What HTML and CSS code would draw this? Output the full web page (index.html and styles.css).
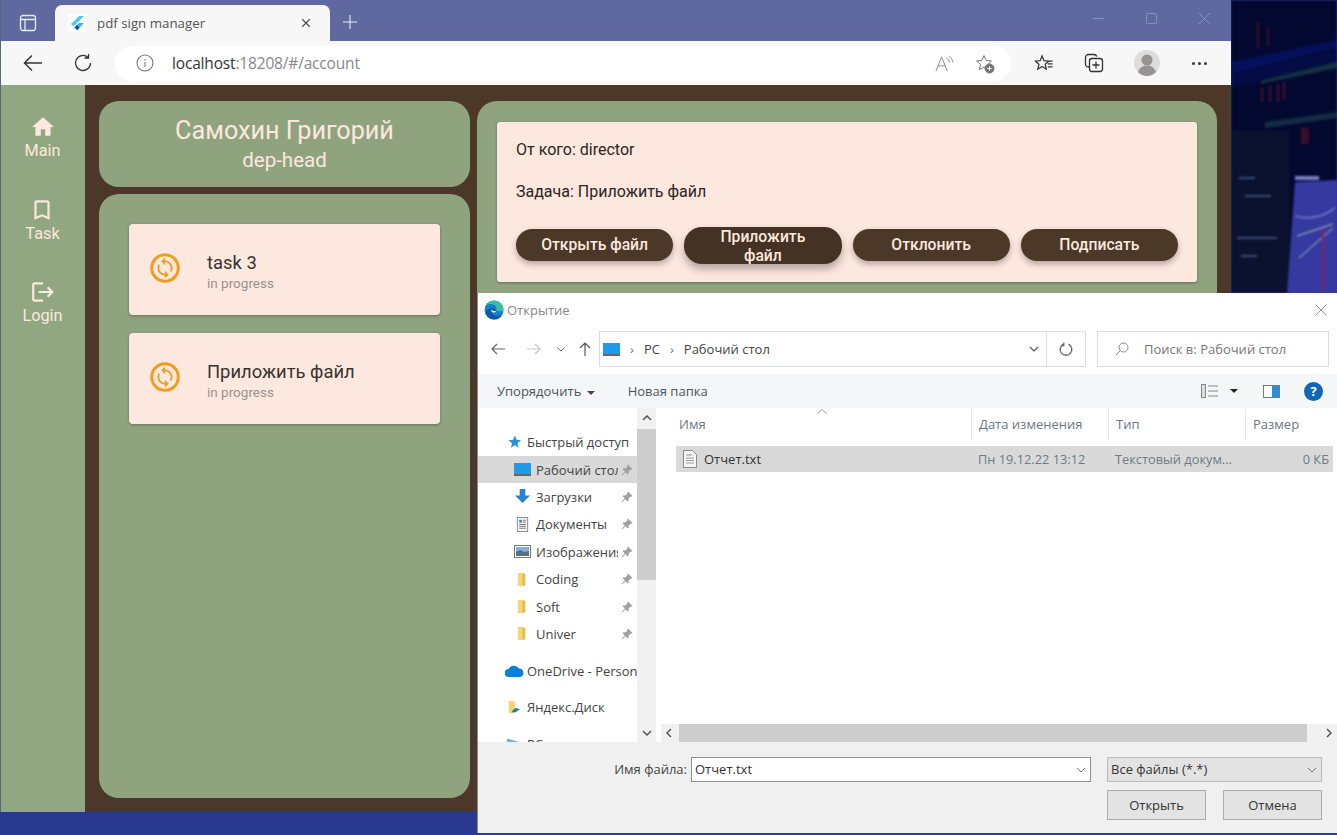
FILE: index.html
```html
<!DOCTYPE html>
<html lang="en">
<head>
  <meta charset="UTF-8">
  <title>pdf sign manager</title>
  <link rel="stylesheet" href="styles.css">
</head>
<body>

  <div class="desktop">

    <!-- Wallpaper seen to the right of the browser -->
    <svg class="wallpaper" viewBox="0 0 106 293" preserveAspectRatio="none">
      <rect width="106" height="293" fill="#030830"/>
      <path d="M0 62 L106 40 V48 L0 74Z" fill="#05105a"/>
      <path d="M30 76 L106 62 V68 L30 84Z" fill="#12323f"/>
      <path d="M34 122 L106 112 V118 L34 128Z" fill="#122c44"/>
      <path d="M0 74 L106 50 V62 L0 88Z" fill="#040c46"/>
      <path d="M26 22 h2 v26 h-2z M36 28 h2 v18 h-2z" fill="#3a1028"/>
      <path d="M30 88 h2 v14 h-2z M38 86 h2 v16 h-2z M46 84 h2 v18 h-2z M52 82 h2 v18 h-2z" fill="#4a1030"/>
      <path d="M40 132 h2 v18 h-2z M70 128 h8 v16 h-8z" fill="#380e2a"/>
      <rect x="0" y="131" width="58" height="162" fill="#0b1230"/>
      <path d="M64 182 L106 180 V293 L56 293Z" fill="#3639a0"/>
      <path d="M64 176 h24 v4 h-24z" fill="#7b80c8"/>
      <path d="M64 216 Q85 222 104 208" stroke="#8a90d0" stroke-width="1.200" fill="none"/>
      <path d="M66 236 L102 224 M68 258 L102 228" stroke="#a8d4b8" stroke-width="1"/>
      <path d="M8 178 h16 M14 196 h26 M6 238 h40 M10 256 h16" stroke="#6f84b8" stroke-width="1"/>
      <path d="M92 290 V228" stroke="#8a2060" stroke-width="2"/>
    </svg>

    <!-- Browser window -->
    <div class="browser">
      <div class="tabstrip">
        <svg class="tab-panel-icon" viewBox="0 0 18 18"><rect x="1.500" y="1.500" width="15" height="15" rx="2.500"/><path d="M1.500 5.500h15M6 5.500v11"/></svg>
        <div class="tab">
          <svg class="flutter" viewBox="0 0 18 18">
            <rect width="18" height="18" fill="#fff"/>
            <path d="M11 2 L3 10 L5.500 12.500 L16 2Z" fill="#54c5f8"/>
            <path d="M11 9 L6.500 13.500 L9 16 L16 9Z" fill="#29b6f6"/>
            <path d="M6.500 13.500 L9 11 L11.500 13.500 L9.500 16Z" fill="#01579b"/>
          </svg>
          <span class="tab-title">pdf sign manager</span>
          <svg class="tab-close" viewBox="0 0 12 12"><path d="M1.500 1.500l9 9M10.500 1.500l-9 9"/></svg>
        </div>
        <svg class="tab-new" viewBox="0 0 18 18"><path d="M9 1v16M1 9h16"/></svg>
        <div class="window-btns">
          <svg viewBox="0 0 14 14"><path d="M1 7h12"/></svg>
          <svg viewBox="0 0 14 14"><rect x="1.500" y="1.500" width="11" height="11" rx="1.500"/></svg>
          <svg viewBox="0 0 14 14"><path d="M1 1l12 12M13 1L1 13"/></svg>
        </div>
      </div>

      <div class="toolbar">
        <svg class="tool-icon back" viewBox="0 0 20 20"><path d="M19 10H1.500M9 2.500L1.500 10 9 17.500"/></svg>
        <svg class="tool-icon reload" viewBox="0 0 20 20"><path d="M17.500 10a7.500 7.500 0 1 1-2.600-5.700M15.500 1v4h-4"/></svg>
        <div class="omnibox">
          <svg class="info" viewBox="0 0 18 18"><circle cx="9" cy="9" r="8"/><path d="M9 8v5M9 5v1.400"/></svg>
          <span class="url"><b>localhost</b>:18208/#/account</span>
          <svg class="read-aloud" viewBox="0 0 20 18"><path d="M1 17L7 2l6 15M3.200 11.500h7.600"/><path d="M12 3q3 1.500 3.500 5M14.500 1q4 2.500 4.500 7"/></svg>
          <svg class="fav-add" viewBox="0 0 20 20"><path d="M9 1.500l2.200 5 5.300.5-4 3.500 1.200 5.200L9 13l-4.700 2.700 1.200-5.200-4-3.500 5.300-.5z"/><circle cx="14.500" cy="14.500" r="4.500"/><path class="plus" d="M14.500 12.300v4.400M12.300 14.500h4.400"/></svg>
        </div>
        <svg class="tool-icon fav" viewBox="0 0 20 20"><path d="M8 2l2 5 5 .5-3.800 3.300 1.200 5.200L8 13.200l-4.500 2.800 1.200-5.200L1 7.500 6 7zM14 7.500h5M14 10.500h5M14 13.500h5"/></svg>
        <svg class="tool-icon coll" viewBox="0 0 20 20"><path d="M6 14H4.500A3 3 0 0 1 1.500 11V4.500a3 3 0 0 1 3-3H10a3 3 0 0 1 2.800 2"/><rect x="5.500" y="5.500" width="13" height="13" rx="2.500"/><path d="M12 8.500v7M8.500 12h7"/></svg>
        <svg class="avatar" viewBox="0 0 26 26"><circle cx="13" cy="13" r="13" fill="#dcdcdc"/><circle cx="13" cy="10" r="5.500" fill="#969390"/><path d="M4 22c2-5 5-6.500 9-6.500s7 1.500 9 6.500q-4 4-9 4t-9-4z" fill="#969390"/></svg>
        <div class="more"><i></i><i></i><i></i></div>
      </div>

      <!-- Flutter app -->
      <div class="app">
        <nav class="side-nav">
          <a class="nav-item">
            <svg viewBox="0 0 24 24"><path d="M10 20v-6h4v6h5v-8h3L12 3 2 12h3v8z"/></svg>
            <span>Main</span>
          </a>
          <a class="nav-item">
            <svg viewBox="0 0 24 24"><path d="M17 3H7c-1.100 0-1.990.9-1.990 2L5 21l7-3 7 3V5c0-1.100-.9-2-2-2zm0 15l-5-2.180L7 18V5h10v13z"/></svg>
            <span>Task</span>
          </a>
          <a class="nav-item">
            <svg viewBox="0 0 24 24"><path d="M17 7l-1.410 1.410L18.170 11H8v2h10.170l-2.580 2.580L17 17l5-5zM4 5h8V3H4c-1.100 0-2 .9-2 2v14c0 1.100.9 2 2 2h8v-2H4V5z"/></svg>
            <span>Login</span>
          </a>
        </nav>

        <div class="left-col">
          <div class="panel profile">
            <div class="profile-name">Самохин Григорий</div>
            <div class="profile-role">dep-head</div>
          </div>
          <div class="panel tasks">
            <div class="task-card">
              <svg class="task-icon" viewBox="0 0 30 30"><circle cx="15" cy="15" r="13.300"/><g transform="translate(3.600 3.600) scale(.95)"><path d="M12 4V1L8 5l4 4V6c3.310 0 6 2.690 6 6 0 1.010-.25 1.970-.7 2.800l1.460 1.460C19.540 15.030 20 13.570 20 12c0-4.420-3.580-8-8-8zm0 14c-3.310 0-6-2.690-6-6 0-1.010.25-1.970.7-2.800L5.240 7.740C4.460 8.970 4 10.430 4 12c0 4.420 3.580 8 8 8v3l4-4-4-4v3z"/></g></svg>
              <div class="task-text">
                <div class="task-title">task 3</div>
                <div class="task-status">in progress</div>
              </div>
            </div>
            <div class="task-card">
              <svg class="task-icon" viewBox="0 0 30 30"><circle cx="15" cy="15" r="13.300"/><g transform="translate(3.600 3.600) scale(.95)"><path d="M12 4V1L8 5l4 4V6c3.310 0 6 2.690 6 6 0 1.010-.25 1.970-.7 2.800l1.460 1.460C19.540 15.030 20 13.570 20 12c0-4.420-3.580-8-8-8zm0 14c-3.310 0-6-2.690-6-6 0-1.010.25-1.970.7-2.800L5.240 7.740C4.460 8.970 4 10.430 4 12c0 4.420 3.580 8 8 8v3l4-4-4-4v3z"/></g></svg>
              <div class="task-text">
                <div class="task-title">Приложить файл</div>
                <div class="task-status">in progress</div>
              </div>
            </div>
          </div>
        </div>

        <div class="panel detail">
          <div class="detail-card">
            <p class="detail-line">От кого: director</p>
            <p class="detail-line">Задача: Приложить файл</p>
            <div class="detail-actions">
              <button class="pill">Открыть файл</button>
              <button class="pill pill-tall">Приложить файл</button>
              <button class="pill">Отклонить</button>
              <button class="pill">Подписать</button>
            </div>
          </div>
        </div>
      </div>
    </div>

    <!-- File open dialog -->
    <div class="dialog">
      <div class="dlg-title">
        <svg class="edge" viewBox="0 0 20 20">
          <circle cx="10" cy="10" r="9.500" fill="#1b7fc9"/>
          <path d="M19.500 10a9.500 9.500 0 0 0-18-4.200C4 3.500 9 3.500 11.500 6c1.500 1.500 1.500 3.500.5 4.500 3 1 7 1 7.500-.5z" fill="#35c1a3"/>
          <path d="M12 10.500c-1 1.500-5 1.500-5-1 0 5 5 8 11 5.500-2 3-4 4.500-8 4.500-5 0-8-4-8-8 2-4 9-5 10-1z" fill="#0c59a4"/>
          <path d="M12 10.500c0 1.500-1 2-2.500 2s-2.500-1.500-2.500-3c1 1.500 4 2 5 1z" fill="#fff"/>
        </svg>
        <span>Открытие</span>
        <svg class="dlg-close" viewBox="0 0 12 12"><path d="M.5.500l11 11M11.500.500l-11 11"/></svg>
      </div>

      <div class="dlg-address">
        <svg class="nav-arrow" viewBox="0 0 14 12"><path d="M14 6H1M6 1L1 6l5 5"/></svg>
        <svg class="nav-arrow off" viewBox="0 0 14 12"><path d="M0 6h13M8 1l5 5-5 5"/></svg>
        <svg class="nav-drop" viewBox="0 0 8 5"><path d="M.5.500L4 4 7.500.500"/></svg>
        <svg class="nav-up" viewBox="0 0 12 14"><path d="M6 14V1M1 6l5-5 5 5"/></svg>
        <div class="crumbs">
          <svg class="monitor" viewBox="0 0 17 13"><rect width="17" height="11" fill="#1f9be8"/><rect y="11" width="17" height="2" fill="#666"/></svg>
          <span class="chev">›</span><span>PC</span><span class="chev">›</span><span>Рабочий стол</span>
          <svg class="crumb-drop" viewBox="0 0 10 6"><path d="M1 1l4 4 4-4"/></svg>
          <div class="crumb-refresh">
            <svg viewBox="0 0 14 14"><path d="M4.500 2.200a5.800 5.800 0 1 0 5 0M4.800 .5v3H1.800"/></svg>
          </div>
        </div>
        <div class="search">
          <svg viewBox="0 0 14 14"><circle cx="8.500" cy="5.500" r="4.500"/><path d="M5.200 8.800L.8 13.200"/></svg>
          <span>Поиск в: Рабочий стол</span>
        </div>
      </div>

      <div class="dlg-bar">
        <span class="bar-btn">Упорядочить <i class="caret"></i></span>
        <span class="bar-btn new-folder">Новая папка</span>
        <div class="bar-right">
          <svg class="view-icon" viewBox="0 0 17 14"><rect x=".5" y=".5" width="4" height="13" fill="#ddd" stroke="#888"/><path d="M7 2h10M7 7h10M7 12h10" stroke="#888"/></svg>
          <i class="caret dark"></i>
          <svg class="pane-icon" viewBox="0 0 17 13"><rect x=".5" y=".5" width="16" height="12" fill="#fff" stroke="#777"/><rect x="9" y="1" width="7" height="11" fill="#2a8fd8"/></svg>
          <span class="help">?</span>
        </div>
      </div>

      <div class="dlg-body">
        <div class="tree">
          <div class="tree-item top quick">
            <svg class="t-icon" viewBox="0 0 16 16"><path d="M9 .5l2 5 5 .5-4 3.300 1.200 5.200L9 11.800 4.500 14.500l1.200-5.200-4-3.300 5.300-.5z" fill="#2f8fdc"/></svg>
            <span>Быстрый доступ</span>
          </div>
          <div class="tree-item selected">
            <svg class="t-icon wide" viewBox="0 0 17 13"><rect width="17" height="11" fill="#1f9be8"/><rect y="11" width="17" height="2" fill="#666"/></svg>
            <span class="t-label">Рабочий стол</span>
            <svg class="pin" viewBox="0 0 12 12"><path d="M7 .5l4.500 4.500-1 .8-.8-.3-2.200 2.200.2 1.800-1 .9L4.500 8.200 1 11.500l-.5-.5 3.300-3.500L1.600 5.300l.9-1 1.800.2 2.200-2.200-.3-.8z"/></svg>
          </div>
          <div class="tree-item">
            <svg class="t-icon wide" viewBox="0 0 16 16"><path d="M5 0h6v7h5l-8 8-8-8h5z" fill="#2a80d2"/></svg>
            <span class="t-label">Загрузки</span>
            <svg class="pin" viewBox="0 0 12 12"><path d="M7 .5l4.500 4.500-1 .8-.8-.3-2.200 2.200.2 1.800-1 .9L4.500 8.200 1 11.500l-.5-.5 3.300-3.500L1.600 5.300l.9-1 1.800.2 2.200-2.200-.3-.8z"/></svg>
          </div>
          <div class="tree-item">
            <svg class="t-icon wide" viewBox="0 0 16 16"><rect x="2.500" y=".5" width="11" height="15" fill="#f4f4f4" stroke="#888"/><path d="M4.500 3h3v3h-3z" fill="#3a8fd0"/><path d="M8.500 3.500h3M8.500 5.500h3M4.500 8h7M4.500 10h7M4.500 12h7" stroke="#777"/></svg>
            <span class="t-label">Документы</span>
            <svg class="pin" viewBox="0 0 12 12"><path d="M7 .5l4.500 4.500-1 .8-.8-.3-2.200 2.200.2 1.800-1 .9L4.500 8.200 1 11.500l-.5-.5 3.300-3.500L1.600 5.300l.9-1 1.800.2 2.200-2.200-.3-.8z"/></svg>
          </div>
          <div class="tree-item">
            <svg class="t-icon wide" viewBox="0 0 17 13"><rect x=".5" y=".5" width="16" height="12" fill="#fff" stroke="#777"/><rect x="2" y="2" width="13" height="5" fill="#7fb2d8"/><path d="M2 7l4-2 4 2 5-1v5H2z" fill="#55707f"/></svg>
            <span class="t-label">Изображения</span>
            <svg class="pin" viewBox="0 0 12 12"><path d="M7 .5l4.500 4.500-1 .8-.8-.3-2.200 2.200.2 1.800-1 .9L4.500 8.200 1 11.500l-.5-.5 3.300-3.500L1.600 5.300l.9-1 1.800.2 2.200-2.200-.3-.8z"/></svg>
          </div>
          <div class="tree-item">
            <svg class="t-icon wide" viewBox="0 0 16 16"><path d="M3 1h5l2 1v13l-7 0z" fill="#f6d573"/><path d="M8 1l3 1v12l-3 1z" fill="#eab94a"/></svg>
            <span class="t-label">Coding</span>
            <svg class="pin" viewBox="0 0 12 12"><path d="M7 .5l4.500 4.500-1 .8-.8-.3-2.200 2.200.2 1.800-1 .9L4.500 8.200 1 11.500l-.5-.5 3.300-3.500L1.600 5.300l.9-1 1.800.2 2.200-2.200-.3-.8z"/></svg>
          </div>
          <div class="tree-item">
            <svg class="t-icon wide" viewBox="0 0 16 16"><path d="M3 1h5l2 1v13l-7 0z" fill="#f6d573"/><path d="M8 1l3 1v12l-3 1z" fill="#eab94a"/></svg>
            <span class="t-label">Soft</span>
            <svg class="pin" viewBox="0 0 12 12"><path d="M7 .5l4.500 4.500-1 .8-.8-.3-2.200 2.200.2 1.800-1 .9L4.500 8.200 1 11.500l-.5-.5 3.300-3.500L1.600 5.300l.9-1 1.800.2 2.200-2.200-.3-.8z"/></svg>
          </div>
          <div class="tree-item">
            <svg class="t-icon wide" viewBox="0 0 16 16"><path d="M3 1h5l2 1v13l-7 0z" fill="#f6d573"/><path d="M8 1l3 1v12l-3 1z" fill="#eab94a"/></svg>
            <span class="t-label">Univer</span>
            <svg class="pin" viewBox="0 0 12 12"><path d="M7 .5l4.500 4.500-1 .8-.8-.3-2.200 2.200.2 1.800-1 .9L4.500 8.200 1 11.500l-.5-.5 3.300-3.500L1.600 5.300l.9-1 1.800.2 2.200-2.200-.3-.8z"/></svg>
          </div>
          <div class="tree-item top onedrive">
            <svg class="t-icon" viewBox="0 0 19 12"><path d="M4 12a4 4 0 0 1-.5-8A6 6 0 0 1 14 3.500a4.300 4.300 0 0 1 1 8.500z" fill="#0c7fd6"/></svg>
            <span>OneDrive - Personal</span>
          </div>
          <div class="tree-item top yandex">
            <svg class="t-icon" viewBox="0 0 16 16"><path d="M2 1h5l2 1v13H2z" fill="#f6d573"/><path d="M5 14q3-5 6-5l4 2q-3 0-5 3z" fill="#1b7bc0"/></svg>
            <span>Яндекс.Диск</span>
          </div>
          <div class="tree-item top pc">
            <svg class="t-icon" viewBox="0 0 16 13"><path d="M1 1l14 4v8H1z" fill="#6fb0e0"/></svg>
            <span>PC</span>
          </div>
        </div>

        <div class="vscroll">
          <svg class="sc-arrow" viewBox="0 0 10 6"><path d="M1 5l4-4 4 4"/></svg>
          <div class="vthumb-track"><div class="vthumb"></div></div>
          <svg class="sc-arrow" viewBox="0 0 10 6"><path d="M1 1l4 4 4-4"/></svg>
        </div>

        <div class="files">
          <svg class="sort-mark" viewBox="0 0 10 5"><path d="M.5 4.500L5 .5l4.500 4"/></svg>
          <div class="file-head">
            <span>Имя</span><span>Дата изменения</span><span>Тип</span><span>Размер</span>
          </div>
          <div class="file-row">
            <span class="file-name">
              <svg viewBox="0 0 14 18"><path d="M.5.500h9l4 4v13H.5z" fill="#f5f5f5" stroke="#8a8a8a"/><path d="M3 5h6M3 8h8M3 10.500h8M3 13h8" stroke="#999"/></svg>
              Отчет.txt
            </span>
            <span class="file-meta">Пн 19.12.22 13:12</span>
            <span class="file-meta">Текстовый докум...</span>
            <span class="file-meta right">0 КБ</span>
          </div>
          <div class="file-space"></div>
          <div class="hscroll">
            <svg class="sc-arrow" viewBox="0 0 6 10"><path d="M5 1L1 5l4 4"/></svg>
            <div class="hthumb"></div>
            <svg class="sc-arrow" viewBox="0 0 6 10"><path d="M1 1l4 4-4 4"/></svg>
          </div>
        </div>
      </div>

      <div class="dlg-footer">
        <label class="name-label">Имя файла:</label>
        <div class="name-input">Отчет.txt<svg viewBox="0 0 10 6"><path d="M1 1l4 4 4-4"/></svg></div>
        <div class="type-select">Все файлы (*.*)<svg viewBox="0 0 10 6"><path d="M1 1l4 4 4-4"/></svg></div>
        <div class="dlg-buttons">
          <button class="dlg-btn">Открыть</button>
          <button class="dlg-btn">Отмена</button>
        </div>
      </div>
    </div>

  </div>

</body>
</html>
```

FILE: styles.css
```css
* {
  box-sizing: border-box;
}

body {
  margin: 0;
  font-family: Roboto, sans-serif;
  background-color: #2a3990;
}

.desktop {
  position: relative;
  width: 1337px;
  height: 835px;
  overflow: hidden;
  background-color: #2a3990;
}

.wallpaper {
  position: absolute;
  left: 1231px;
  top: 0;
  width: 106px;
  height: 293px;
  filter: blur(1px);
}

/* Browser window */
.browser {
  position: absolute;
  left: 0;
  top: 0;
  width: 1231px;
  height: 812px;
  border-left: 1px solid #4f6a78;
  display: flex;
  flex-direction: column;
}

.tabstrip {
  height: 41px;
  flex-shrink: 0;
  background-color: #5f689f;
  display: flex;
  align-items: flex-end;
  position: relative;
}

.tab-panel-icon {
  width: 18px;
  height: 18px;
  margin: 0 18px 9px 18px;
  fill: none;
  stroke: #e6e8f2;
  stroke-width: 1.3;
}

.tab {
  width: 275px;
  height: 36px;
  background-color: #f7f7f7;
  border-radius: 7px 7px 0 0;
  display: flex;
  align-items: center;
  padding: 0 19px 0 13px;
}

.flutter {
  width: 18px;
  height: 18px;
  flex-shrink: 0;
}

.tab-title {
  margin-left: 11px;
  flex: 1;
  font-family: "Open Sans", sans-serif;
  font-size: 13.3px;
  color: #555;
}

.tab-close {
  width: 10px;
  height: 10px;
  fill: none;
  stroke: #444;
  stroke-width: 1.3;
}

.tab-new {
  width: 16px;
  height: 16px;
  margin: 0 0 11px 12px;
  fill: none;
  stroke: #eceef6;
  stroke-width: 1.2;
}

.window-btns {
  position: absolute;
  right: 0;
  top: 12px;
  display: flex;
  gap: 40px;
  padding-right: 20px;
}

.window-btns svg {
  width: 13px;
  height: 13px;
  fill: none;
  stroke: #8d94bf;
  stroke-width: 1;
}

.toolbar {
  height: 44px;
  flex-shrink: 0;
  background-color: #f7f7f7;
  display: flex;
  align-items: center;
  position: relative;
}

.tool-icon {
  fill: none;
  stroke: #333;
  stroke-width: 1.3;
  flex-shrink: 0;
}

.back {
  width: 20px;
  height: 20px;
  margin-left: 22px;
  stroke-width: 1.5;
}

.reload {
  width: 20px;
  height: 20px;
  margin-left: 30px;
}

.omnibox {
  width: 896px;
  height: 35px;
  margin-left: 22px;
  background-color: #fff;
  border-radius: 18px;
  display: flex;
  align-items: center;
  padding-left: 21px;
}

.info {
  width: 18px;
  height: 18px;
  fill: none;
  stroke: #777;
  stroke-width: 1.1;
}

.url {
  margin-left: 18px;
  flex: 1;
  font-family: "Open Sans", sans-serif;
  font-size: 15.5px;
  letter-spacing: -0.17px;
  color: #888;
}

.url b {
  font-weight: 400;
  color: #333;
}

.read-aloud {
  width: 19px;
  height: 17px;
  fill: none;
  stroke: #888;
  stroke-width: 1;
}

.fav-add {
  width: 20px;
  height: 20px;
  margin: 2px 16px 0 21px;
  fill: none;
  stroke: #777;
  stroke-width: 1;
}

.fav-add circle {
  fill: #777;
}

.fav-add .plus {
  stroke: #fff;
}

.fav {
  width: 20px;
  height: 19px;
  margin-left: 23px;
}

.coll {
  width: 20px;
  height: 20px;
  margin-left: 30px;
}

.avatar {
  width: 26px;
  height: 26px;
  margin-left: 30px;
}

.more {
  margin-left: 32px;
  display: flex;
  gap: 3px;
}

.more i {
  width: 3px;
  height: 3px;
  border-radius: 50%;
  background-color: #333;
}

/* App */
.app {
  flex: 1;
  background-color: #4b3829;
  display: flex;
  overflow: hidden;
}

.side-nav {
  width: 84px;
  flex-shrink: 0;
  background-color: #91a781;
  padding: 29px 1px 0 0;
  display: flex;
  flex-direction: column;
  align-items: center;
  gap: 25.500px;
}

.nav-item {
  display: flex;
  flex-direction: column;
  align-items: center;
  color: #fde8df;
  font-size: 16.300px;
  line-height: 19px;
  height: 57px;
}

.nav-item svg {
  width: 26px;
  height: 26px;
  margin-bottom: 1px;
  fill: currentColor;
}

.left-col {
  width: 371px;
  margin: 16px 0 14px 14px;
  display: flex;
  flex-direction: column;
  gap: 7px;
  flex-shrink: 0;
}

.panel {
  background-color: #8fa37f;
  border-radius: 20px;
}

.profile {
  height: 86px;
  color: #fde8df;
  text-align: center;
  padding-top: 15px;
}

.profile-name {
  font-size: 25.200px;
  line-height: 30px;
}

.profile-role {
  font-size: 20.500px;
  line-height: 28px;
}

.tasks {
  flex: 1;
  padding: 30px 30px 0;
  display: flex;
  flex-direction: column;
  gap: 18px;
}

.task-card {
  height: 91px;
  background-color: #fde8df;
  border-radius: 4px;
  box-shadow: 0 1px 3px rgba(0, 0, 0, 0.3);
  display: flex;
  align-items: center;
  padding-left: 21px;
}

.task-icon {
  width: 30px;
  height: 30px;
  margin-bottom: 3px;
  fill: #ef9f1e;
}

.task-icon circle {
  fill: none;
  stroke: #ef9f1e;
  stroke-width: 3;
}

.task-text {
  margin-left: 27px;
  padding-top: 2px;
}

.task-title {
  font-size: 18.400px;
  line-height: 24px;
  color: #3a3230;
}

.task-status {
  font-size: 13.500px;
  line-height: 16px;
  color: #9a918c;
}

.detail {
  width: 740px;
  margin: 16px 0 14px 7px;
  padding: 21px 20px;
}

.detail-card {
  height: 160px;
  background-color: #fde8df;
  border-radius: 3px;
  box-shadow: 0 1px 3px rgba(0, 0, 0, 0.3);
  padding: 19px 19px 0;
}

.detail-line {
  margin: 0 0 24px;
  font-size: 16px;
  line-height: 18px;
  color: #2b2422;
}

.detail-actions {
  display: flex;
  gap: 11px;
  align-items: center;
  margin-top: 18px;
  height: 40px;
}

.pill {
  width: 157.500px;
  height: 32px;
  padding: 0 22px;
  border: none;
  border-radius: 16px;
  background-color: #4b3829;
  color: #fde8df;
  font-family: Roboto, sans-serif;
  font-size: 15.700px;
  font-weight: 500;
  line-height: 18px;
  box-shadow: 0 3px 6px rgba(0, 0, 0, 0.3);
}

.pill-tall {
  height: 37px;
  border-radius: 18px;
  background-color: #443225;
  line-height: 19px;
  box-shadow: 0 5px 9px rgba(0, 0, 0, 0.3);
}

/* Open file dialog */
.dialog {
  position: absolute;
  left: 477px;
  top: 293px;
  width: 860px;
  height: 540px;
  background-color: #fff;
  border-left: 1px solid #8a8a80;
  display: flex;
  flex-direction: column;
  font-family: "Open Sans", sans-serif;
  font-size: 13px;
  color: #444;
  overflow: hidden;
}

.dlg-title {
  height: 33px;
  flex-shrink: 0;
  display: flex;
  align-items: center;
  padding: 0 10px 0 6px;
  color: #888;
}

.edge {
  width: 20px;
  height: 20px;
  margin-right: 3px;
}

.dlg-title span {
  flex: 1;
}

.dlg-close {
  width: 12px;
  height: 12px;
  fill: none;
  stroke: #888;
  stroke-width: 0.9;
}

.dlg-address {
  height: 36px;
  margin-top: 5px;
  flex-shrink: 0;
  display: flex;
  align-items: center;
}

.nav-arrow {
  width: 14px;
  height: 12px;
  margin-left: 13px;
  fill: none;
  stroke: #666;
  stroke-width: 1.2;
}

.nav-arrow.off {
  margin-left: 22px;
  stroke: #c5c5c5;
}

.nav-drop {
  width: 8px;
  height: 5px;
  margin-left: 16px;
  fill: none;
  stroke: #666;
}

.nav-up {
  width: 12px;
  height: 14px;
  margin-left: 14px;
  fill: none;
  stroke: #555;
  stroke-width: 1.2;
}

.crumbs {
  width: 487px;
  height: 36px;
  margin-left: 8px;
  border: 1px solid #dcdcdc;
  display: flex;
  align-items: center;
  gap: 10px;
  padding-left: 3px;
}

.monitor {
  width: 17px;
  height: 13px;
}

.chev {
  color: #777;
}

.crumb-drop {
  width: 10px;
  height: 6px;
  margin-left: auto;
  fill: none;
  stroke: #555;
  stroke-width: 1.2;
}

.crumb-refresh {
  width: 39px;
  height: 34px;
  margin-left: -3px;
  border-left: 1px solid #dcdcdc;
  display: flex;
  align-items: center;
  justify-content: center;
}

.crumb-refresh svg {
  width: 14px;
  height: 14px;
  fill: none;
  stroke: #666;
  stroke-width: 1.3;
}

.search {
  width: 232px;
  height: 36px;
  margin-left: 11px;
  border: 1px solid #dcdcdc;
  display: flex;
  align-items: center;
  padding-left: 17px;
  color: #777;
}

.search svg {
  width: 14px;
  height: 14px;
  margin-right: 15px;
  fill: none;
  stroke: #888;
}

.dlg-bar {
  height: 34px;
  margin-top: 7px;
  flex-shrink: 0;
  background-color: #f5f6f7;
  display: flex;
  align-items: center;
  padding-left: 19px;
  color: #4a5560;
}

.new-folder {
  margin-left: 33px;
}

.caret {
  display: inline-block;
  width: 0;
  height: 0;
  margin-left: 2px;
  vertical-align: middle;
  border-left: 4px solid transparent;
  border-right: 4px solid transparent;
  border-top: 4px solid #445;
}

.caret.dark {
  margin: 0;
  border-top-color: #223;
}

.bar-right {
  margin-left: auto;
  display: flex;
  align-items: center;
  padding-right: 14px;
}

.view-icon {
  width: 17px;
  height: 14px;
  margin-right: 12px;
}

.pane-icon {
  width: 17px;
  height: 13px;
  margin: 0 24px 0 25px;
}

.help {
  width: 19px;
  height: 19px;
  border-radius: 50%;
  background-color: #0f67b5;
  color: #fff;
  font-weight: 700;
  font-size: 13px;
  line-height: 19px;
  text-align: center;
}

.dlg-body {
  height: 334px;
  flex-shrink: 0;
  display: flex;
}

.tree {
  width: 159px;
  flex-shrink: 0;
  overflow: hidden;
  padding-top: 20.500px;
}

.tree-item {
  height: 27.400px;
  display: flex;
  align-items: center;
  padding-left: 36px;
  white-space: nowrap;
  position: relative;
}

.tree-item.top {
  padding-left: 27px;
  overflow: hidden;
}

.tree-item.selected {
  background-color: #d9d9d9;
}

.tree-item.onedrive {
  margin-top: 9.500px;
}

.tree-item.yandex {
  margin-top: 9px;
}

.tree-item.pc {
  margin-top: 9px;
}

.t-icon {
  width: 16px;
  height: 14px;
  position: absolute;
  left: 28px;
}

.t-icon.wide {
  left: 36px;
  width: 17px;
  height: 15px;
}

.tree-item.top span {
  padding-left: 22px;
}

.tree-item.top .t-icon {
  left: 28px;
}

.tree-item.onedrive .t-icon {
  width: 19px;
  left: 27px;
}

.t-label {
  margin-left: 22px;
  width: 82px;
  overflow: hidden;
}

.pin {
  width: 12px;
  height: 12px;
  position: absolute;
  left: 143px;
  fill: #a0a0a0;
}

.vscroll {
  width: 19px;
  flex-shrink: 0;
  background-color: #f1f1f1;
  display: flex;
  flex-direction: column;
  align-items: center;
  padding-top: 7px;
  padding-bottom: 6px;
}

.sc-arrow {
  width: 10px;
  height: 6px;
  flex-shrink: 0;
  fill: none;
  stroke: #555;
  stroke-width: 1.5;
}

.vthumb-track {
  flex: 1;
  width: 100%;
  padding-top: 8px;
}

.vthumb {
  height: 151px;
  background-color: #cdcdcd;
}

.files {
  flex: 1;
  display: flex;
  flex-direction: column;
  position: relative;
  min-width: 0;
}

.sort-mark {
  position: absolute;
  left: 161px;
  top: 1px;
  width: 10px;
  height: 5px;
  fill: none;
  stroke: #999;
}

.file-head {
  height: 33px;
  margin-left: 15px;
  display: grid;
  grid-template-columns: 300px 137px 137px 1fr;
  align-items: center;
  color: #6b7784;
}

.file-head span {
  height: 31px;
  line-height: 31px;
  padding-left: 7px;
  border-left: 1px solid #e5e5e5;
  white-space: nowrap;
}

.file-head span:first-child {
  border-left: none;
  padding-left: 8px;
}

.file-row {
  height: 26px;
  margin: 5px 4px 0 20px;
  background-color: #d9d9d9;
  display: grid;
  grid-template-columns: 295px 137px 137px 1fr;
  align-items: center;
}

.file-name {
  display: flex;
  align-items: center;
  gap: 7px;
  padding-left: 7px;
  color: #333;
}

.file-name svg {
  width: 14px;
  height: 18px;
}

.file-meta {
  padding-left: 7px;
  color: #6f7a85;
  font-size: 12.800px;
  white-space: nowrap;
}

.file-meta.right {
  text-align: right;
  padding-right: 4px;
}

.file-space {
  flex: 1;
}

.hscroll {
  height: 18px;
  margin-left: 5px;
  background-color: #f1f1f1;
  display: flex;
  align-items: center;
  padding: 0 5px;
}

.hscroll .sc-arrow {
  width: 6px;
  height: 10px;
}

.hthumb {
  flex: 1;
  height: 100%;
  margin: 0 19px 0 7px;
  background-color: #cdcdcd;
}

.dlg-footer {
  flex: 1;
  background-color: #f0f0f0;
  display: grid;
  grid-template-columns: 213px 400px 215px;
  align-items: start;
  align-content: start;
  padding-top: 15px;
}

.name-label {
  line-height: 25px;
  text-align: right;
  padding-right: 4px;
}

.name-input,
.type-select {
  height: 25px;
  line-height: 23px;
  padding: 0 4px 0 3px;
  border: 1px solid #8f8f8f;
  background-color: #fff;
  color: #333;
  display: flex;
  align-items: center;
  justify-content: space-between;
}

.type-select {
  width: 215px;
  margin-left: 16px;
  background-color: #e3e3e3;
  border-color: #bcbcbc;
}

.name-input svg,
.type-select svg {
  width: 10px;
  height: 6px;
  fill: none;
  stroke: #777;
}

.dlg-buttons {
  grid-column: 3;
  margin-left: 16px;
  width: 215px;
  margin-top: 8px;
  display: flex;
  justify-content: space-between;
}

.dlg-btn {
  width: 99px;
  height: 30px;
  padding: 0;
  border: 1px solid #adadad;
  background-color: #e3e3e3;
  color: #333;
  font-family: "Open Sans", sans-serif;
  font-size: 13px;
}
```
